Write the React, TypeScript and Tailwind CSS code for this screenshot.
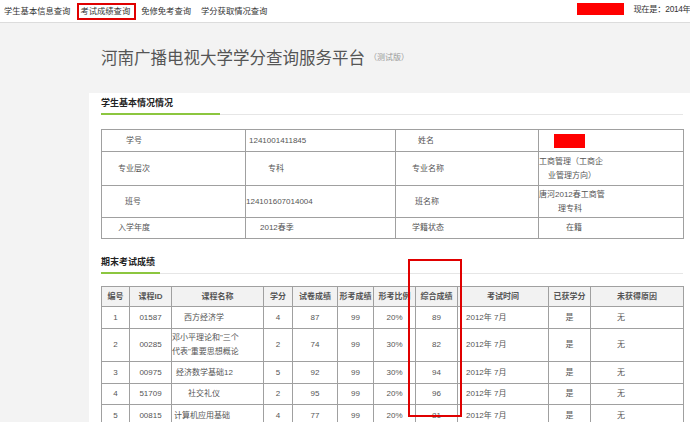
import React from 'react';

const font = { fontFamily: '"Liberation Sans", "Noto Sans CJK SC", sans-serif' };

const scoreCols = [28, 42, 92, 29, 45, 36, 42, 42, 91, 42, 93];
const headers = ['编号', '课程ID', '课程名称', '学分', '试卷成绩', '形考成绩', '形考比例', '综合成绩', '考试时间', '已获学分', '未获得原因'];

const rows = [
  { no: '1', id: '01587', name: ['西方经济学'], indent: 'pl-[12px]', credit: '4', paper: '87', form: '99', ratio: '20%', total: '89', h: 'h-[22px]' },
  { no: '2', id: '00285', name: ['邓小平理论和"三个', '代表"重要思想概论'], indent: 'pl-0', credit: '2', paper: '74', form: '99', ratio: '30%', total: '82', h: 'h-[33px]' },
  { no: '3', id: '00975', name: ['经济数学基础12'], indent: 'pl-[4px]', credit: '5', paper: '92', form: '99', ratio: '30%', total: '94', h: 'h-[22px]' },
  { no: '4', id: '51709', name: ['社交礼仪'], indent: 'pl-[16px]', credit: '2', paper: '95', form: '99', ratio: '20%', total: '96', h: 'h-[21px]' },
  { no: '5', id: '00815', name: ['计算机应用基础'], indent: 'pl-[2px]', credit: '4', paper: '77', form: '99', ratio: '20%', total: '81', h: 'h-[22px]' },
];

function SectionTitle({ title, green }: { title: string; green: string }) {
  return (
    <div className="mr-[7px]">
      <div className="text-[9px] font-bold text-[#222] leading-[12px]">{title}</div>
      <div className="flex mt-[4px] h-[2px] items-end">
        <div className={`${green} h-[2px] bg-[#8cc63f]`} />
        <div className="flex-1 h-[1px] bg-[#e6e6e6]" />
      </div>
    </div>
  );
}

export default function App() {
  const td = 'border border-[#a0a0a0] text-[8px] text-[#555] align-middle';
  return (
    <div style={font} className="w-[690px] h-[422px] overflow-hidden bg-[#f3f3f3]">
      {/* top nav */}
      <div className="h-[23px] bg-white border-b border-[#dcdcdc] flex items-center text-[8.3px] text-[#333] whitespace-nowrap">
        <span className="ml-[4px]">学生基本信息查询</span>
        <span className="ml-[7px] pl-[1px] pr-[4px] border-2 border-[#e00000] h-[17px] leading-[13px]">考试成绩查询</span>
        <span className="ml-[5px]">免修免考查询</span>
        <span className="ml-[10px]">学分获取情况查询</span>
        <div className="ml-[310px] shrink-0 flex items-center self-start mt-[3px]">
          <div className="w-[47px] h-[12px] bg-[#ff0000] mr-[9px]" />
          <span className="leading-[12px] tracking-[-0.3px]">现在是：2014年0</span>
        </div>
      </div>

      {/* title */}
      <div className="h-[70px] pl-[101px] pt-[25px]">
        <div className="flex items-center h-[20px]">
          <span className="text-[16.5px] leading-[20px] text-[#555]">河南广播电视大学学分查询服务平台</span>
          <span className="text-[8px] text-[#999] ml-[4px]">（测试版）</span>
        </div>
      </div>

      {/* panel */}
      <div className="ml-[89px] bg-white pl-[12px] pt-[4px] h-[400px]">
        <SectionTitle title="学生基本情况情况" green="w-[119px]" />

        <table className="mt-[14px] border-collapse table-fixed w-[582px]">
          <colgroup>
            <col className="w-[144px]" />
            <col className="w-[150px]" />
            <col className="w-[143px]" />
            <col className="w-[145px]" />
          </colgroup>
          <tbody>
            <tr className="h-[22px]">
              <td className={`${td} pl-[24px]`}>学号</td>
              <td className={`${td} pl-[3px]`}>1241001411845</td>
              <td className={`${td} pl-[22px]`}>姓名</td>
              <td className={`${td} pl-[15px]`}><div className="w-[31px] h-[14px] bg-[#ff0000]" /></td>
            </tr>
            <tr className="h-[34px]">
              <td className={`${td} pl-[16px]`}>专业层次</td>
              <td className={`${td} pl-[22px]`}>专科</td>
              <td className={`${td} pl-[16px]`}>专业名称</td>
              <td className={`${td} leading-[14px]`}>工商管理（工商企<br /><span className="pl-[9px]">业管理方向）</span></td>
            </tr>
            <tr className="h-[32px]">
              <td className={`${td} pl-[23px]`}>班号</td>
              <td className={td}>124101607014004</td>
              <td className={`${td} pl-[19px]`}>班名称</td>
              <td className={`${td} leading-[14px]`}>唐河2012春工商管<br /><span className="pl-[19px]">理专科</span></td>
            </tr>
            <tr className="h-[21px]">
              <td className={`${td} pl-[16px]`}>入学年度</td>
              <td className={`${td} pl-[14px]`}>2012春季</td>
              <td className={`${td} pl-[16px]`}>学籍状态</td>
              <td className={`${td} pl-[27px]`}>在籍</td>
            </tr>
          </tbody>
        </table>

        <div className="mt-[17px]">
          <SectionTitle title="期末考试成绩" green="w-[59px]" />
        </div>

        <div className="relative mt-[12px]">
          <table className="border-collapse table-fixed w-[582px]">
            <colgroup>
              {scoreCols.map((w, i) => (
                <col key={i} style={{ width: w }} />
              ))}
            </colgroup>
            <thead>
              <tr className="h-[20px] bg-[#f2f2f2]">
                {headers.map((h) => (
                  <th key={h} className={`${td} font-bold text-[#333] text-center whitespace-nowrap px-0`}>{h}</th>
                ))}
              </tr>
            </thead>
            <tbody>
              {rows.map((r) => (
                <tr key={r.no} className={r.h}>
                  <td className={`${td} text-center`}>{r.no}</td>
                  <td className={`${td} text-center`}>{r.id}</td>
                  <td className={`${td} ${r.indent} leading-[14px] whitespace-nowrap overflow-hidden`}>
                    {r.name.map((n, i) => (
                      <div key={i}>{n}</div>
                    ))}
                  </td>
                  <td className={`${td} text-center`}>{r.credit}</td>
                  <td className={`${td} text-center`}>{r.paper}</td>
                  <td className={`${td} text-center`}>{r.form}</td>
                  <td className={`${td} text-center`}>{r.ratio}</td>
                  <td className={`${td} text-center`}>{r.total}</td>
                  <td className={`${td} pl-[8px]`}>2012年 7月</td>
                  <td className={`${td} text-center`}>是</td>
                  <td className={`${td} pl-[26px]`}>无</td>
                </tr>
              ))}
            </tbody>
          </table>
          {/* highlight box */}
          <div className="absolute left-[307px] top-[-27px] w-[54px] h-[158px] border-2 border-[#e00000] pointer-events-none" />
        </div>
      </div>
    </div>
  );
}
